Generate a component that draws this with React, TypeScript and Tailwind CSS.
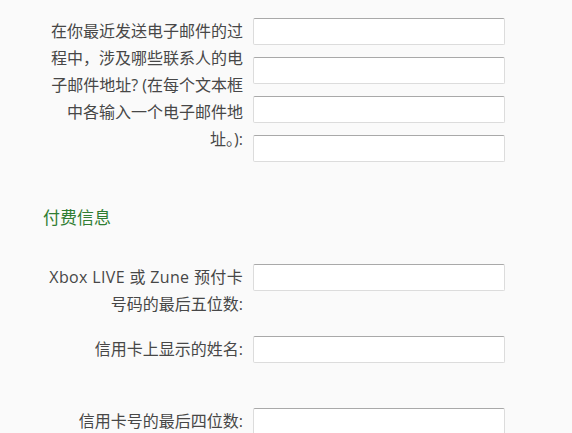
const font = { fontFamily: '"Open Sans", "Noto Sans CJK SC", sans-serif' };

function Field() {
  return (
    <input
      type="text"
      className="block h-[27px] w-[252px] rounded-[2px] border border-[#dcdcdc] border-t-[#a9a9a9] bg-white px-2 text-[14px] outline-none"
    />
  );
}

function Row({ lines, inputs = 1, className = "" }: { lines: React.ReactNode[]; inputs?: number; className?: string }) {
  return (
    <div className={`flex items-start ${className}`}>
      <div className="mr-[10px] w-[196px] whitespace-nowrap text-right text-[16px] leading-[27px] text-[#474747]">
        {lines.map((l, i) => (
          <div key={i}>{l}</div>
        ))}
      </div>
      <div className="flex flex-col gap-[12px]">
        {Array.from({ length: inputs }).map((_, i) => (
          <Field key={i} />
        ))}
      </div>
    </div>
  );
}

export default function App() {
  return (
    <div className="h-[433px] w-[572px] overflow-hidden bg-[#fafafa] pl-[47px] pt-[18px]" style={font}>
      <Row
        inputs={4}
        lines={[
          "在你最近发送电子邮件的过",
          "程中，涉及哪些联系人的电",
          "子邮件地址? (在每个文本框",
          "中各输入一个电子邮件地",
          "址。):",
        ]}
      />

      <h3 className="-ml-[4px] mt-[42px] text-[17px] font-normal leading-[27px] text-[#2f7d32]">付费信息</h3>

      <Row
        className="mt-[33px]"
        lines={[<span className="tracking-[0.35px]">Xbox LIVE 或 Zune 预付卡</span>, "号码的最后五位数:"]}
      />
      <Row className="mt-[18px]" lines={["信用卡上显示的姓名:"]} />
      <Row className="mt-[45px]" lines={["信用卡号的最后四位数:"]} />
    </div>
  );
}
